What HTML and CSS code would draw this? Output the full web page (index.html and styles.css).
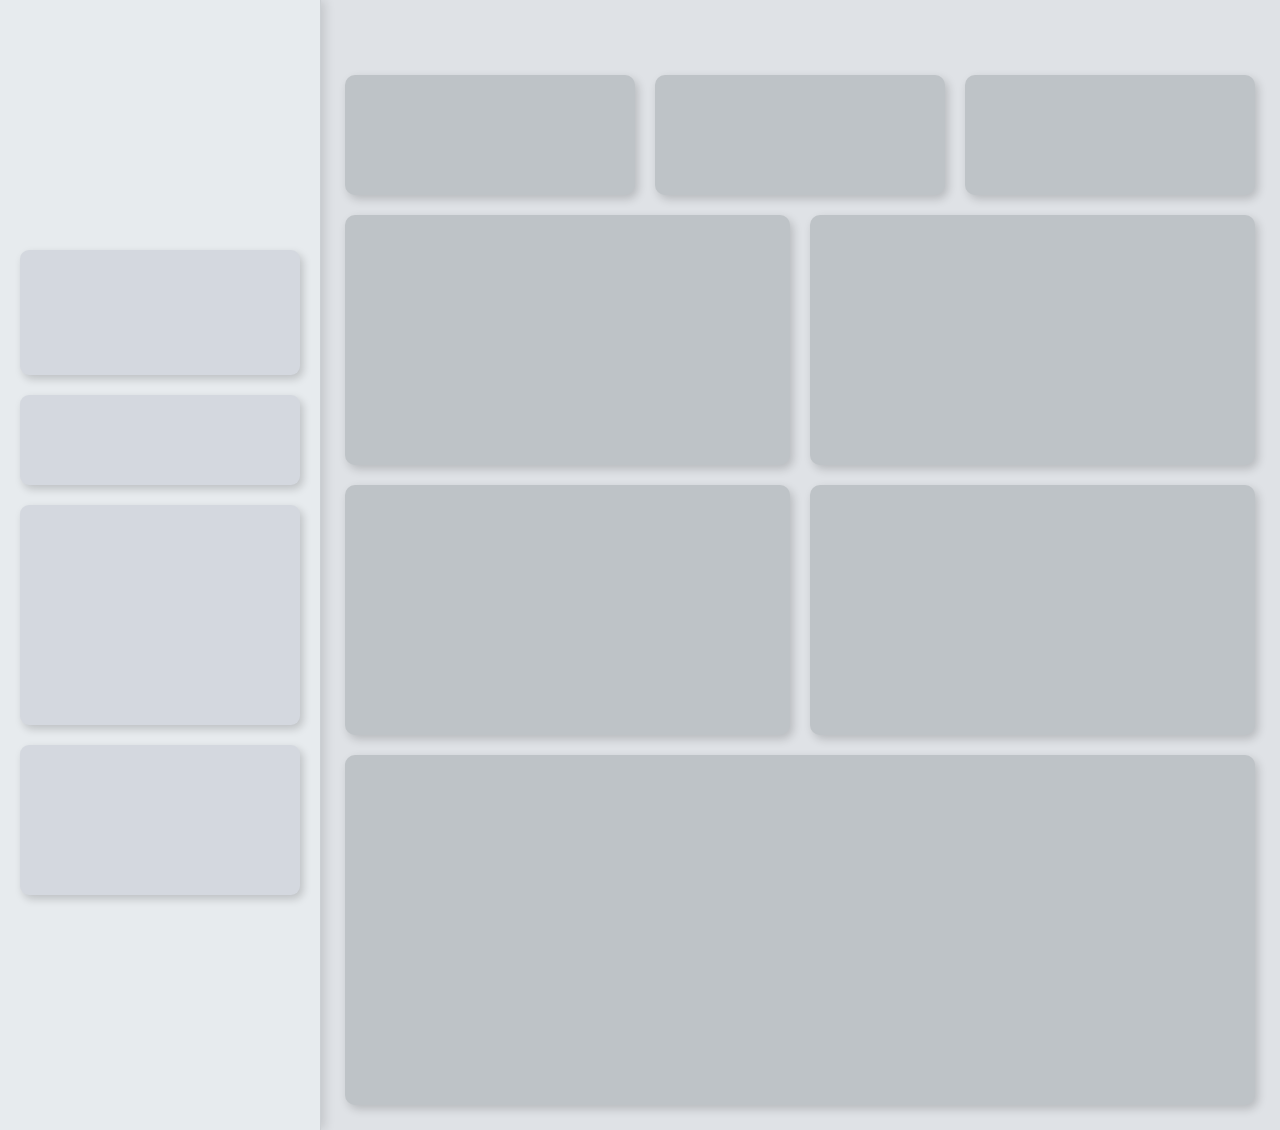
FILE: index.html
```html
<!DOCTYPE html>
<html lang="en">
<head>
<meta charset="utf-8">
<title>Dashboard</title>
<link rel="stylesheet" href="styles.css">
</head>
<body>
<div class="app">
  <aside class="sidebar">
    <div class="side-card h125"></div>
    <div class="side-card h90"></div>
    <div class="side-card h220"></div>
    <div class="side-card h150"></div>
  </aside>
  <main class="main">
    <div class="row three">
      <div class="card h120"></div>
      <div class="card h120"></div>
      <div class="card h120"></div>
    </div>
    <div class="row two">
      <div class="card h250"></div>
      <div class="card h250"></div>
    </div>
    <div class="row two">
      <div class="card h250"></div>
      <div class="card h250"></div>
    </div>
    <div class="row one">
      <div class="card h350"></div>
    </div>
  </main>
</div>
</body>
</html>
```

FILE: styles.css
```css
* { box-sizing: border-box; }
html, body { margin: 0; padding: 0; }
body {
  width: 1280px;
  height: 1130px;
  overflow: hidden;
  background: #dfe2e6;
  font-family: "Liberation Sans", Arial, sans-serif;
}
.app {
  display: flex;
  height: 1130px;
}
.sidebar {
  width: 321px;
  flex: 0 0 321px;
  background: #e7ebee;
  border-right: 1px solid #cbcfd3;
  box-shadow: 4px 0 10px rgba(0, 0, 0, 0.12);
  padding: 250px 20px 0 20px;
  display: flex;
  flex-direction: column;
  gap: 20px;
  position: relative;
  z-index: 1;
}
.side-card {
  width: 280px;
  background: #d4d8df;
  border-radius: 9px;
  box-shadow: 3px 4px 9px rgba(0, 0, 0, 0.18);
}
.main {
  flex: 1;
  padding: 75px 25px 25px 24px;
  display: flex;
  flex-direction: column;
  gap: 20px;
}
.row { display: grid; gap: 20px; }
.row.three { grid-template-columns: repeat(3, 1fr); }
.row.two { grid-template-columns: repeat(2, 1fr); }
.row.one { grid-template-columns: 1fr; }
.card {
  background: #bec3c7;
  border-radius: 10px;
  box-shadow: 3px 4px 10px rgba(0, 0, 0, 0.18);
}
.h90 { height: 90px; }
.h120 { height: 120px; }
.h125 { height: 125px; }
.h150 { height: 150px; }
.h220 { height: 220px; }
.h250 { height: 250px; }
.h350 { height: 350px; }
```
